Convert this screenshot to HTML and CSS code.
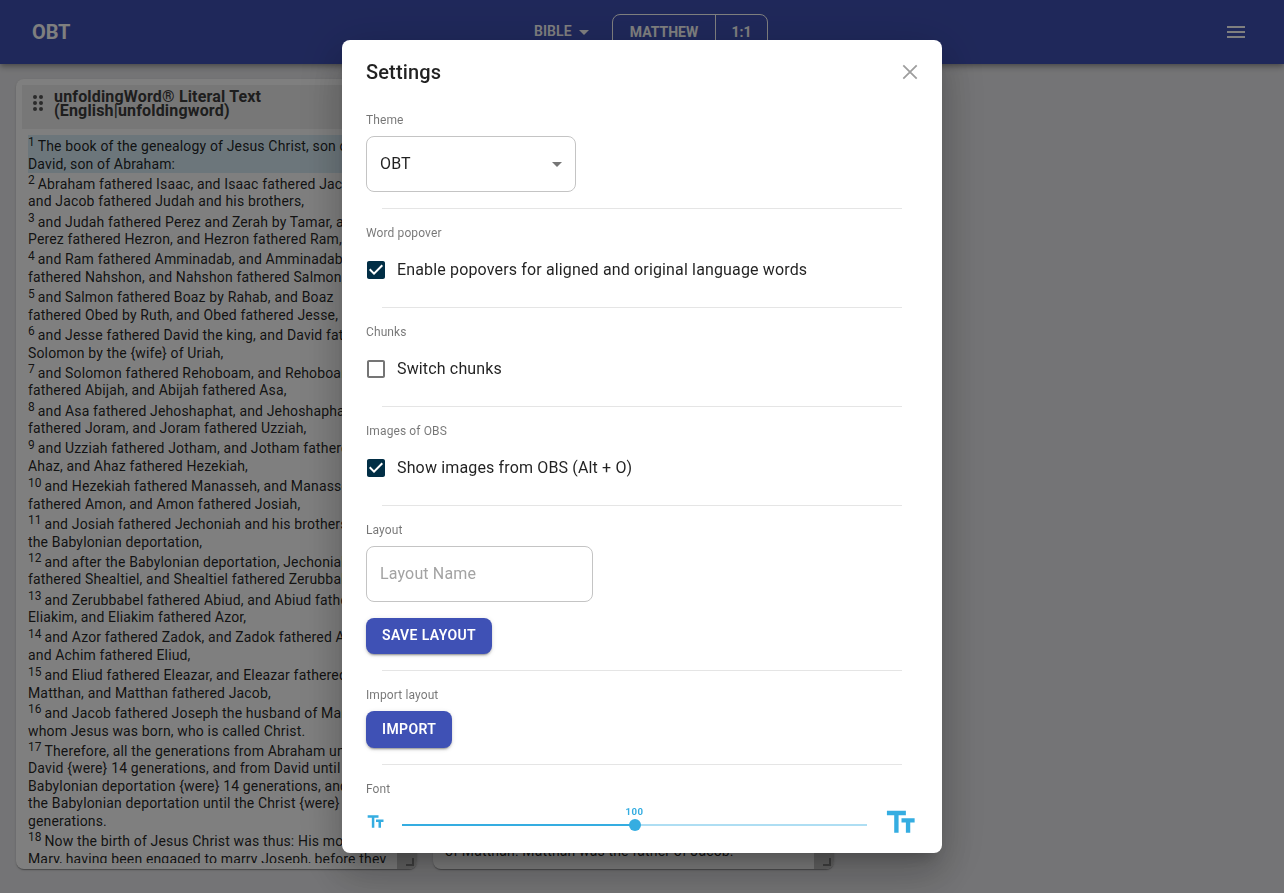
FILE: index.html
```html
<!DOCTYPE html>
<html lang="en">
<head>
<meta charset="utf-8">
<title>OBT</title>
<link rel="stylesheet" href="styles.css">
</head>
<body>
<div class="app">
  <header class="bar">
    <div class="brand">OBT</div>
    <div class="picker">
      <button class="bible"><span>BIBLE</span><svg width="24" height="24" viewBox="0 0 24 24"><path d="M7 10l5 5 5-5z"/></svg></button>
      <div class="refs"><button class="ref-book">MATTHEW</button><button class="ref-verse">1:1</button></div>
    </div>
    <svg class="menu" width="24" height="24" viewBox="0 0 24 24"><path d="M3 18h18v-2H3v2zm0-5h18v-2H3v2zm0-7v2h18V6H3z"/></svg>
  </header>
  <main class="workspace">
    <section class="card">
      <div class="card-head">
        <svg class="grip" width="12" height="18" viewBox="0 0 12 18"><circle cx="3" cy="3" r="2"/><circle cx="9" cy="3" r="2"/><circle cx="3" cy="9" r="2"/><circle cx="9" cy="9" r="2"/><circle cx="3" cy="15" r="2"/><circle cx="9" cy="15" r="2"/></svg>
        <h2>unfoldingWord® Literal Text<br>(English|unfoldingword)</h2>
      </div>
      <div class="verses">
        <p class="current"><sup>1&nbsp;</sup>The book of the genealogy of Jesus Christ, son of<br>David, son of Abraham:</p>
        <p><sup>2&nbsp;</sup>Abraham fathered Isaac, and Isaac fathered Jacob,<br>and Jacob fathered Judah and his brothers,</p>
        <p><sup>3&nbsp;</sup>and Judah fathered Perez and Zerah by Tamar, and<br>Perez fathered Hezron, and Hezron fathered Ram,</p>
        <p><sup>4&nbsp;</sup>and Ram fathered Amminadab, and Amminadab<br>fathered Nahshon, and Nahshon fathered Salmon,</p>
        <p><sup>5&nbsp;</sup>and Salmon fathered Boaz by Rahab, and Boaz<br>fathered Obed by Ruth, and Obed fathered Jesse,</p>
        <p><sup>6&nbsp;</sup>and Jesse fathered David the king, and David fathered<br>Solomon by the {wife} of Uriah,</p>
        <p><sup>7&nbsp;</sup>and Solomon fathered Rehoboam, and Rehoboam<br>fathered Abijah, and Abijah fathered Asa,</p>
        <p><sup>8&nbsp;</sup>and Asa fathered Jehoshaphat, and Jehoshaphat<br>fathered Joram, and Joram fathered Uzziah,</p>
        <p><sup>9&nbsp;</sup>and Uzziah fathered Jotham, and Jotham fathered<br>Ahaz, and Ahaz fathered Hezekiah,</p>
        <p><sup>10&nbsp;</sup>and Hezekiah fathered Manasseh, and Manasseh<br>fathered Amon, and Amon fathered Josiah,</p>
        <p><sup>11&nbsp;</sup>and Josiah fathered Jechoniah and his brothers at<br>the Babylonian deportation,</p>
        <p><sup>12&nbsp;</sup>and after the Babylonian deportation, Jechoniah<br>fathered Shealtiel, and Shealtiel fathered Zerubbabel,</p>
        <p><sup>13&nbsp;</sup>and Zerubbabel fathered Abiud, and Abiud fathered<br>Eliakim, and Eliakim fathered Azor,</p>
        <p><sup>14&nbsp;</sup>and Azor fathered Zadok, and Zadok fathered Achim,<br>and Achim fathered Eliud,</p>
        <p><sup>15&nbsp;</sup>and Eliud fathered Eleazar, and Eleazar fathered<br>Matthan, and Matthan fathered Jacob,</p>
        <p><sup>16&nbsp;</sup>and Jacob fathered Joseph the husband of Mary, by<br>whom Jesus was born, who is called Christ.</p>
        <p><sup>17&nbsp;</sup>Therefore, all the generations from Abraham until<br>David {were} 14 generations, and from David until the<br>Babylonian deportation {were} 14 generations, and from<br>the Babylonian deportation until the Christ {were} 14<br>generations.</p>
        <p><sup>18&nbsp;</sup>Now the birth of Jesus Christ was thus: His mother,<br>Mary, having been engaged to marry Joseph, before they</p>
      </div>
      <span class="resize"></span>
    </section>
    <section class="card">
      <div class="verses tail">
        <p>of Matthan. Matthan was the father of Jacob.</p>
        <p><sup>16&nbsp;</sup></p>
      </div>
      <span class="resize"></span>
    </section>
  </main>
</div>

<div class="backdrop">
  <div class="dialog" role="dialog" aria-label="Settings">
    <div class="dialog-head">
      <h1>Settings</h1>
      <svg class="close" width="24" height="24" viewBox="0 0 24 24"><path d="M5.3 5.3L18.7 18.7M18.7 5.3L5.3 18.7"/></svg>
    </div>
    <div class="group">
      <div class="label">Theme</div>
      <div class="select"><span>OBT</span><svg width="24" height="24" viewBox="0 0 24 24"><path d="M7 10l5 5 5-5z"/></svg></div>
    </div>
    <div class="group">
      <div class="label">Word popover</div>
      <div class="check"><svg class="on" width="24" height="24" viewBox="0 0 24 24"><path d="M19 3H5c-1.11 0-2 .9-2 2v14c0 1.1.89 2 2 2h14c1.11 0 2-.9 2-2V5c0-1.1-.89-2-2-2zm-9 14l-5-5 1.41-1.41L10 14.17l7.59-7.59L19 8l-9 9z"/></svg><span>Enable popovers for aligned and original language words</span></div>
    </div>
    <div class="group">
      <div class="label">Chunks</div>
      <div class="check"><svg class="off" width="24" height="24" viewBox="0 0 24 24"><path d="M19 5v14H5V5h14m0-2H5c-1.1 0-2 .9-2 2v14c0 1.1.9 2 2 2h14c1.1 0 2-.9 2-2V5c0-1.1-.9-2-2-2z"/></svg><span>Switch chunks</span></div>
    </div>
    <div class="group">
      <div class="label">Images of OBS</div>
      <div class="check"><svg class="on" width="24" height="24" viewBox="0 0 24 24"><path d="M19 3H5c-1.11 0-2 .9-2 2v14c0 1.1.89 2 2 2h14c1.11 0 2-.9 2-2V5c0-1.1-.89-2-2-2zm-9 14l-5-5 1.41-1.41L10 14.17l7.59-7.59L19 8l-9 9z"/></svg><span>Show images from OBS (Alt + O)</span></div>
    </div>
    <div class="group">
      <div class="label">Layout</div>
      <input class="field" type="text" placeholder="Layout Name">
      <button class="action">SAVE LAYOUT</button>
    </div>
    <div class="group">
      <div class="label">Import layout</div>
      <button class="action">IMPORT</button>
    </div>
    <div class="group">
      <div class="label">Font</div>
      <div class="font-row">
        <svg class="tt small" viewBox="0 0 24 24"><path d="M2 4v3h5v12h3V7h5V4H2zm19 5h-9v3h3v7h3v-7h3V9z"/></svg>
        <div class="slider"><div class="fill"></div><div class="thumb"></div><span class="value">100</span></div>
        <svg class="tt large" viewBox="0 0 24 24"><path d="M2 4v3h5v12h3V7h5V4H2zm19 5h-9v3h3v7h3v-7h3V9z"/></svg>
      </div>
    </div>
  </div>
</div>
</body>
</html>
```
FILE: styles.css
```css
* { box-sizing: border-box; }
body { margin: 0; font-family: Roboto, "Liberation Sans", sans-serif; color: rgba(0,0,0,.87); overflow: hidden; }
h1, h2, p { margin: 0; }
button { font: inherit; color: inherit; background: none; border: 0; padding: 0; }
svg { display: block; flex: none; }

.app { height: 893px; background: #e9e9ec; }
.bar {
  position: relative; height: 64px; padding: 0 36px 0 32px; background: #3f51b5; color: #fff;
  display: grid; grid-template-columns: 1fr auto 1fr; align-items: center;
  box-shadow: 0 2px 4px -1px rgba(0,0,0,.2), 0 4px 5px 0 rgba(0,0,0,.14), 0 1px 10px 0 rgba(0,0,0,.12);
}
.brand { font-size: 20px; font-weight: 700; letter-spacing: -.15px; }
.picker { display: flex; align-items: center; gap: 16px; padding-left: 22px; }
.bible { display: flex; align-items: center; justify-content: space-between; width: 62px; height: 36px; margin-top: -2px; font-size: 14px; font-weight: 600; letter-spacing: .1px; }
.bible svg { fill: currentColor; margin-top: 2px; }
.refs { display: flex; height: 36px; border: 1px solid #fff; border-radius: 8px; font-size: 14px; font-weight: 700; letter-spacing: .7px; }
.ref-book { width: 103px; border-right: 1px solid #fff; }
.ref-verse { width: 51px; }
.menu { fill: currentColor; justify-self: end; }

.workspace { display: flex; gap: 16px; padding: 15px 16px; }
.card {
  position: relative; width: 401px; height: 790px; padding: 6px; background: #fff; border-radius: 8px; overflow: hidden;
  box-shadow: 0 2px 1px -1px rgba(0,0,0,.2), 0 1px 1px rgba(0,0,0,.14), 0 1px 3px rgba(0,0,0,.12);
}
.card-head { height: 44px; background: #eee; display: flex; align-items: center; padding: 0 10px; gap: 10px; }
.card-head h2 { font-size: 16px; line-height: 14px; font-weight: 700; letter-spacing: .17px; margin-top: -6px; white-space: nowrap; color: #3c3c3c; }
.grip { fill: #555; margin-top: -8px; }
.verses { height: 728px; margin-top: 6px; padding: 0 6px; overflow: hidden; font-size: 14px; line-height: 17.5px; letter-spacing: .15px; white-space: nowrap; }
.verses p { padding-top: 2.8px; }
.verses sup { font-size: 12px; line-height: 0; letter-spacing: 0; position: relative; top: 1px; }
.verses .current { padding-top: 3.05px; background: #d9edf7; }
.tail { margin-top: 0; height: 778px; padding-top: 755.5px; }
.resize { position: absolute; right: 0; bottom: 0; width: 20px; height: 20px; background: #c8c8c8; }
.resize::after { content: ""; position: absolute; right: 3px; bottom: 3px; width: 6px; height: 6px; border: solid #808080; border-width: 0 2px 2px 0; }

.backdrop { position: fixed; inset: 0; display: flex; justify-content: center; align-items: flex-start; padding-top: 40px; background: rgba(0,0,0,.5); }
.dialog {
  width: 600px; height: 813px; padding-bottom: 8px; background: #fff; border-radius: 8px; overflow: hidden;
  box-shadow: 0 11px 15px -7px rgba(0,0,0,.2), 0 24px 38px 3px rgba(0,0,0,.14), 0 9px 46px 8px rgba(0,0,0,.12);
}
.dialog-head { height: 64px; padding: 0 20px 0 24px; display: flex; align-items: center; justify-content: space-between; margin-bottom: -8px; }
.dialog-head h1 { font-size: 20px; font-weight: 500; letter-spacing: .15px; }
.close { fill: none; stroke: #9e9e9e; stroke-width: 1.8; }
.group { position: relative; padding: 16px 24px; }
.group + .group { padding-top: 17px; }
.group + .group::before { content: ""; position: absolute; top: 0; left: 40px; right: 40px; height: 1px; background: #e5e5e5; }
.label { height: 16px; margin-bottom: 8px; font-size: 12px; line-height: 16px; letter-spacing: .11px; color: rgba(0,0,0,.54); }
.select { width: 210px; height: 56px; padding: 0 6px 0 13px; border: 1px solid #c4c4c4; border-radius: 8px; display: flex; align-items: center; justify-content: space-between; font-size: 16px; letter-spacing: .15px; }
.select svg { fill: #757575; }
.select span, .check span { padding-bottom: 2px; }
.check { height: 42px; display: flex; align-items: center; gap: 9px; margin-left: -2px; font-size: 16px; letter-spacing: .15px; }
.on { fill: #012e45; }
.off { fill: #757575; }
.field { display: block; width: 227px; height: 56px; padding: 0 13px 2px; border: 1px solid #c4c4c4; border-radius: 8px; font: 16px Roboto, sans-serif; letter-spacing: .15px; margin-bottom: 15.6px; }
.field::placeholder { color: #a3a3a3; opacity: 1; }
.action {
  display: block; height: 36.5px; padding: 0 16px 1px; border-radius: 8px; background: #3f51b5; color: #fff; font-size: 14px; font-weight: 600; letter-spacing: .38px;
  box-shadow: 0 3px 1px -2px rgba(0,0,0,.2), 0 2px 2px rgba(0,0,0,.14), 0 1px 5px rgba(0,0,0,.12);
}
.font-row { display: flex; align-items: center; height: 35px; }
.tt { fill: #35ade1; }
.small { width: 20px; height: 20px; }
.large { width: 35px; height: 35px; margin-right: -1px; }
.slider { position: relative; flex: 1; height: 2px; margin: 6px 17px 0 16px; background: #aedef3; }
.fill { width: 50%; height: 100%; background: #35ade1; }
.thumb { position: absolute; left: 50%; top: -5px; width: 12px; height: 12px; margin-left: -6px; border-radius: 50%; background: #35ade1; }
.value { position: absolute; left: 50%; top: -18px; transform: translateX(-50%); font-size: 9.6px; line-height: 12px; font-weight: 700; letter-spacing: .5px; color: #35ade1; }
```
